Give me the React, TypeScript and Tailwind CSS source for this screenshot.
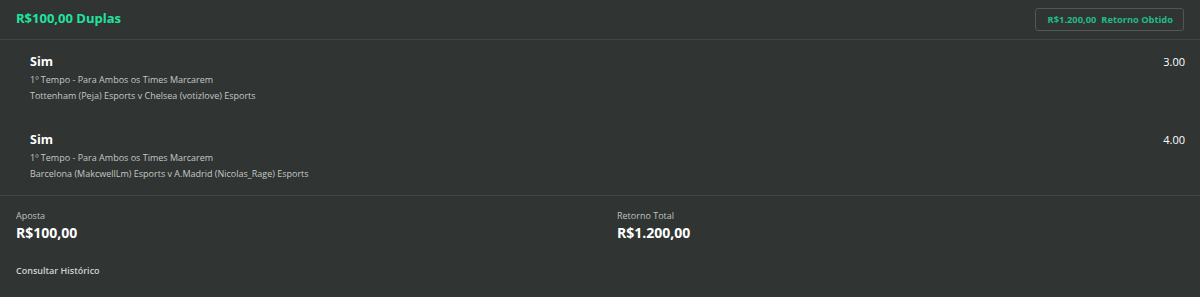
const font = { fontFamily: '"Open Sans", "Noto Sans", sans-serif' };

type Selection = {
  pick: string;
  market: string;
  event: string;
  odds: string;
};

const selections: Selection[] = [
  {
    pick: "Sim",
    market: "1º Tempo - Para Ambos os Times Marcarem",
    event: "Tottenham (Peja) Esports v Chelsea (votizlove) Esports",
    odds: "3.00",
  },
  {
    pick: "Sim",
    market: "1º Tempo - Para Ambos os Times Marcarem",
    event: "Barcelona (MakcwellLm) Esports v A.Madrid (Nicolas_Rage) Esports",
    odds: "4.00",
  },
];

function SelectionRow({ s }: { s: Selection }) {
  return (
    <div className="flex items-start justify-between pl-[30px] pr-[15px]">
      <div className="flex flex-col">
        <span className="text-[12.5px] font-bold leading-[18px] text-white">{s.pick}</span>
        <span className="mt-[1px] text-[9px] leading-4 text-[#c4c8c6]">{s.market}</span>
        <span className="text-[9px] leading-4 text-[#c4c8c6]">{s.event}</span>
      </div>
      <span className="text-[11px] leading-[18px] text-white">{s.odds}</span>
    </div>
  );
}

export default function App() {
  return (
    <div className="h-[297px] w-[1200px] bg-[#303432]" style={font}>
      <div className="flex h-10 items-center justify-between border-b border-[#414644] pl-4 pr-4">
        <span className="pb-[2px] text-[13px] font-bold text-[#20e3a0]">R$100,00 Duplas</span>
        <div className="flex h-[23px] items-center gap-[5px] rounded-[3px] border border-[#515755] pr-[10px] pl-[12px] text-[9.3px] font-bold text-[#22bb86]">
          <span>R$1.200,00</span>
          <span>Retorno Obtido</span>
        </div>
      </div>

      <div className="flex flex-col gap-[27px] border-b border-[#414644] pt-[13px] pb-[13px]">
        {selections.map((s, i) => (
          <SelectionRow key={i} s={s} />
        ))}
      </div>

      <div className="grid grid-cols-[601px_1fr] px-4 pt-[12px]">
        <div className="flex flex-col">
          <span className="text-[9px] leading-4 text-[#bfc3c1]">Aposta</span>
          <span className="-mt-[1px] text-[14px] font-bold leading-5 text-white">R$100,00</span>
        </div>
        <div className="flex flex-col">
          <span className="text-[9px] leading-4 text-[#bfc3c1]">Retorno Total</span>
          <span className="-mt-[1px] text-[14px] font-bold leading-5 text-white">R$1.200,00</span>
        </div>
      </div>

      <div className="px-4 pt-[21px] text-[9px] font-semibold text-[#cfd3d1]">Consultar Histórico</div>
    </div>
  );
}
